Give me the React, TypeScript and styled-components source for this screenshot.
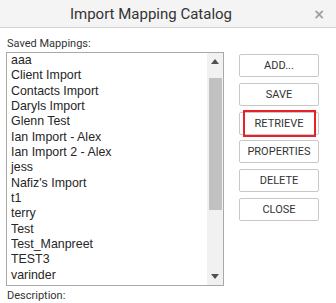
import React from "react";
import styled, { createGlobalStyle } from "styled-components";

const GlobalStyle = createGlobalStyle`
  html, body {
    margin: 0;
    padding: 0;
    background: #ffffff;
    font-family: Roboto, "Liberation Sans", Arial, sans-serif;
  }
`;

const Dialog = styled.div`
  width: 336px;
  height: 303px;
  overflow: hidden;
  background: #fff;
`;

const TitleBar = styled.div`
  height: 28px;
  box-sizing: border-box;
  background: #f4f4f4;
  border-bottom: 1px solid #d4d4d4;
  display: flex;
  align-items: center;
  position: relative;
`;

const Title = styled.div`
  flex: 1;
  padding-right: 34px;
  text-align: center;
  font-size: 15px;
  color: #333;
`;

const CloseX = styled.span`
  position: absolute;
  right: 11px;
  top: 6px;
  font-size: 14px;
  font-weight: 700;
  color: #a0a0a0;
  font-family: "DejaVu Sans", sans-serif;
`;

const Body = styled.div`
  display: flex;
  padding: 9px 0 0 6px;
`;

const LeftCol = styled.div`
  display: flex;
  flex-direction: column;
  width: 218px;
`;

const Label = styled.div`
  font-size: 11px;
  color: #333;
  height: 14px;
  line-height: 14px;
  padding-left: 1px;
  margin-bottom: 1px;
`;

const ListBox = styled.div`
  display: flex;
  height: 234px;
  box-sizing: border-box;
  border: 1px solid #a9a9a9;
  margin-bottom: 3px;
`;

const Items = styled.div`
  flex: 1;
  overflow: hidden;
  padding: 0 4px;
`;

const Item = styled.div`
  height: 15.35px;
  line-height: 15px;
  font-family: "Liberation Sans", Arial, sans-serif;
  font-size: 12.4px;
  color: #262626;
  white-space: nowrap;
`;

const ScrollTrack = styled.div`
  width: 16px;
  background: #f1f1f1;
  display: flex;
  flex-direction: column;
  align-items: center;
`;

const Arrow = styled.div`
  height: 17px;
  display: flex;
  align-items: center;
  justify-content: center;
  width: 100%;
`;

const Thumb = styled.div`
  width: 13px;
  height: 132px;
  margin-top: 8px;
  background: #c1c1c1;
`;

const Spacer = styled.div`
  flex: 1;
`;

const ButtonCol = styled.div`
  display: flex;
  flex-direction: column;
  gap: 5.8px;
  margin-left: 15px;
  padding-top: 17px;
`;

const Button = styled.button`
  position: relative;
  width: 80px;
  height: 23px;
  box-sizing: border-box;
  background: #fff;
  border: 1px solid #c8c8c8;
  border-radius: 2px;
  font-family: Roboto, sans-serif;
  font-size: 11px;
  color: #333;
  padding: 0;
  text-transform: uppercase;
`;

const Highlight = styled.span`
  position: absolute;
  left: 3px;
  right: 2px;
  top: -3px;
  bottom: -3px;
  border: 2px solid #e8202a;
`;

const mappings = [
  "aaa",
  "Client Import",
  "Contacts Import",
  "Daryls Import",
  "Glenn Test",
  "Ian Import - Alex",
  "Ian Import 2 - Alex",
  "jess",
  "Nafiz's Import",
  "t1",
  "terry",
  "Test",
  "Test_Manpreet",
  "TEST3",
  "varinder",
  "Varinder_test",
];

const buttons = ["Add...", "Save", "Retrieve", "Properties", "Delete", "Close"];

const TriangleUp = () => (
  <svg width="8" height="5" viewBox="0 0 8 5">
    <path d="M0 5 L4 0 L8 5 Z" fill="#505050" />
  </svg>
);

const TriangleDown = () => (
  <svg width="8" height="5" viewBox="0 0 8 5">
    <path d="M0 0 L8 0 L4 5 Z" fill="#505050" />
  </svg>
);

export default function App() {
  return (
    <Dialog>
      <GlobalStyle />
      <TitleBar>
        <Title>Import Mapping Catalog</Title>
        <CloseX>×</CloseX>
      </TitleBar>
      <Body>
        <LeftCol>
          <Label>Saved Mappings:</Label>
          <ListBox>
            <Items>
              {mappings.map((m) => (
                <Item key={m}>{m}</Item>
              ))}
            </Items>
            <ScrollTrack>
              <Arrow>
                <TriangleUp />
              </Arrow>
              <Thumb />
              <Spacer />
              <Arrow>
                <TriangleDown />
              </Arrow>
            </ScrollTrack>
          </ListBox>
          <Label>Description:</Label>
        </LeftCol>
        <ButtonCol>
          {buttons.map((b) => (
            <Button key={b}>
              {b}
              {b === "Retrieve" && <Highlight />}
            </Button>
          ))}
        </ButtonCol>
      </Body>
    </Dialog>
  );
}
